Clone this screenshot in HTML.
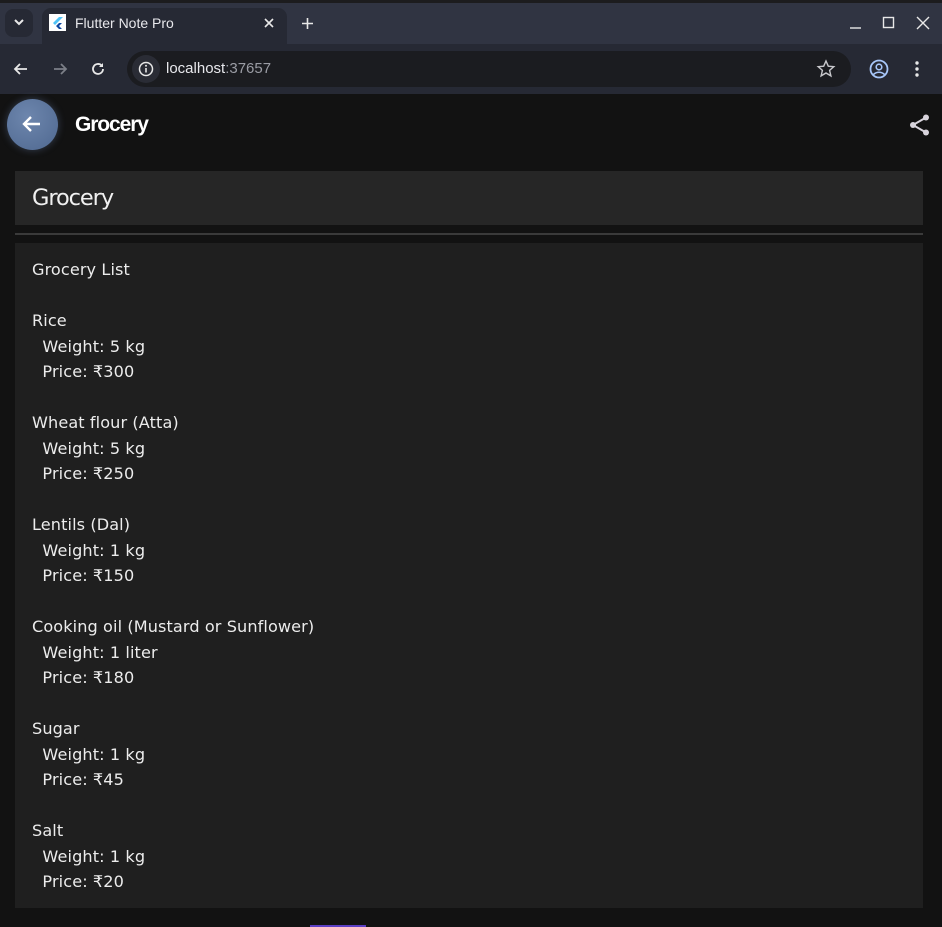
<!DOCTYPE html>
<html><head><meta charset="utf-8"><style>
*{margin:0;padding:0;box-sizing:border-box}
body{width:942px;height:927px;background:#121212;font-family:"Liberation Sans","DejaVu Sans",sans-serif;position:relative;overflow:hidden;color:#fff}
.tabbar{position:absolute;left:0;top:0;width:942px;height:44px;background:#303442}
.top{position:absolute;left:0;top:0;width:942px;height:3px;background:#1c1c1e}
.tab{position:absolute;left:42px;top:8px;width:245px;height:36px;background:#262934;border-radius:9px 9px 0 0}
.toolbar{position:absolute;left:0;top:44px;width:942px;height:50px;background:#262934}
.omni{position:absolute;left:127px;top:51px;width:724px;height:36px;background:#1b1c20;border-radius:18px}
.t{position:absolute;white-space:nowrap}
.card1{position:absolute;left:15px;top:171px;width:908px;height:54px;background:#262626}
.line{position:absolute;left:15px;top:233px;width:908px;height:2px;background:#3a3a3a}
.card2{position:absolute;left:15px;top:243px;width:908px;height:665px;background:#1f1f1f}
.txt{position:absolute;left:32px;top:257px;font-family:"DejaVu Sans",sans-serif;font-size:16.1px;line-height:25.5px;color:#ececec;white-space:pre;letter-spacing:0.1px}
</style></head><body>
<div class="tabbar"></div><div class="top"></div>
<div style="position:absolute;left:5px;top:9px;width:28px;height:28px;background:#262934;border-radius:8px"></div>
<svg class="t" style="left:12px;top:17px" width="14" height="10"><path d="M3 3l4 4 4-4" stroke="#e8e8e8" stroke-width="2" fill="none"/></svg>
<div class="tab"></div>
<div class="t" style="left:49px;top:14px;width:17px;height:17px;background:#fff"></div>
<svg class="t" style="left:50px;top:15px" width="15" height="15"><path d="M9 2L3 8l2 2 8-8z" fill="#4fc3f7"/><path d="M9 8L6 11l3 3h3L9 11l3-3z" fill="#0d47a1"/></svg>
<div class="t" style="left:75px;top:15px;font-size:14px;color:#e8e8ec">Flutter Note Pro</div>
<svg class="t" style="left:263px;top:17px" width="12" height="12"><path d="M2 2l8 8M10 2l-8 8" stroke="#e8e8e8" stroke-width="1.6"/></svg>
<svg class="t" style="left:301px;top:17px" width="13" height="13"><path d="M6.5 1v11M1 6.5h11" stroke="#e8e8e8" stroke-width="1.6"/></svg>
<svg class="t" style="left:848px;top:15px" width="16" height="16"><path d="M2 13h11" stroke="#e8e8e8" stroke-width="1.4"/></svg>
<svg class="t" style="left:882px;top:16px" width="14" height="14"><rect x="1.5" y="1.5" width="10" height="10" stroke="#e8e8e8" stroke-width="1.4" fill="none"/></svg>
<svg class="t" style="left:916px;top:16px" width="14" height="14"><path d="M1 1l12 12M13 1L1 13" stroke="#e8e8e8" stroke-width="1.4"/></svg>
<div class="toolbar"></div>
<svg class="t" style="left:13px;top:61px" width="16" height="16"><path d="M14 8H2M7 3L2 8l5 5" stroke="#e8e8e8" stroke-width="1.8" fill="none"/></svg>
<svg class="t" style="left:52px;top:61px" width="16" height="16"><path d="M2 8h12M9 3l5 5-5 5" stroke="#7c7f88" stroke-width="1.8" fill="none"/></svg>
<svg class="t" style="left:90px;top:61px" width="16" height="16"><path d="M13 8a5 5 0 1 1-1.5-3.6" stroke="#e8e8e8" stroke-width="1.8" fill="none"/><path d="M13 2v4h-4z" fill="#e8e8e8"/></svg>
<div class="omni"></div>
<div class="t" style="left:132px;top:55px;width:28px;height:28px;border-radius:50%;background:#2a2c35"></div>
<svg class="t" style="left:137px;top:60px" width="18" height="18"><circle cx="9" cy="9" r="6.5" stroke="#e8e8e8" stroke-width="1.5" fill="none"/><path d="M9 8v4.5" stroke="#e8e8e8" stroke-width="1.6"/><circle cx="9" cy="5.7" r="1" fill="#e8e8e8"/></svg>
<div class="t" style="left:166px;top:60px;font-size:15px;color:#e8e8ec">localhost<span style="color:#9a9ca4">:37657</span></div>
<svg class="t" style="left:816px;top:59px" width="20" height="20"><path d="M10 2l2.3 5.2 5.5.5-4.2 3.7 1.3 5.5L10 14l-4.9 2.9 1.3-5.5L2.2 7.7l5.5-.5z" stroke="#c8c8cc" stroke-width="1.4" fill="none"/></svg>
<svg class="t" style="left:868px;top:58px" width="22" height="22"><circle cx="11" cy="11" r="8.5" stroke="#a8c7fa" stroke-width="1.8" fill="none"/><circle cx="11" cy="9" r="2.8" stroke="#a8c7fa" stroke-width="1.6" fill="none"/><path d="M5.5 16.5c3-3 8-3 11 0" stroke="#a8c7fa" stroke-width="1.6" fill="none"/></svg>
<svg class="t" style="left:913px;top:60px" width="8" height="18"><circle cx="4" cy="3" r="1.7" fill="#e8e8e8"/><circle cx="4" cy="9" r="1.7" fill="#e8e8e8"/><circle cx="4" cy="15" r="1.7" fill="#e8e8e8"/></svg>
<div class="t" style="left:7px;top:99px;width:51px;height:51px;border-radius:50%;background:radial-gradient(circle at 40% 35%,#6d86ad,#4f6890);box-shadow:0 0 8px rgba(120,150,200,.35)"></div>
<svg class="t" style="left:21px;top:113px" width="22" height="22"><path d="M19 11H4M10 4l-7 7 7 7" stroke="#fff" stroke-width="2.4" fill="none"/></svg>
<div class="t" style="left:75px;top:113px;font-size:21px;font-weight:bold;letter-spacing:-1.1px;color:#fff">Grocery</div>
<svg class="t" style="left:908px;top:113px" width="24" height="24"><circle cx="18" cy="4.5" r="3" fill="#d8d4dc"/><circle cx="5" cy="12" r="3" fill="#d8d4dc"/><circle cx="18" cy="19.5" r="3" fill="#d8d4dc"/><path d="M18 4.5L5 12l13 7.5" stroke="#d8d4dc" stroke-width="2" fill="none"/></svg>
<div class="card1"></div>
<div class="t" style="left:32px;top:185px;font-size:22.5px;color:#f0f0f0;font-family:'DejaVu Sans',sans-serif;letter-spacing:-1.1px">Grocery</div>
<div class="line"></div>
<div class="card2"></div>
<div class="txt">Grocery List

Rice
  Weight: 5 kg
  Price: ₹300

Wheat flour (Atta)
  Weight: 5 kg
  Price: ₹250

Lentils (Dal)
  Weight: 1 kg
  Price: ₹150

Cooking oil (Mustard or Sunflower)
  Weight: 1 liter
  Price: ₹180

Sugar
  Weight: 1 kg
  Price: ₹45

Salt
  Weight: 1 kg
  Price: ₹20</div>
<div class="t" style="left:310px;top:925px;width:56px;height:2px;background:#5b3fc4"></div>
</body></html>
